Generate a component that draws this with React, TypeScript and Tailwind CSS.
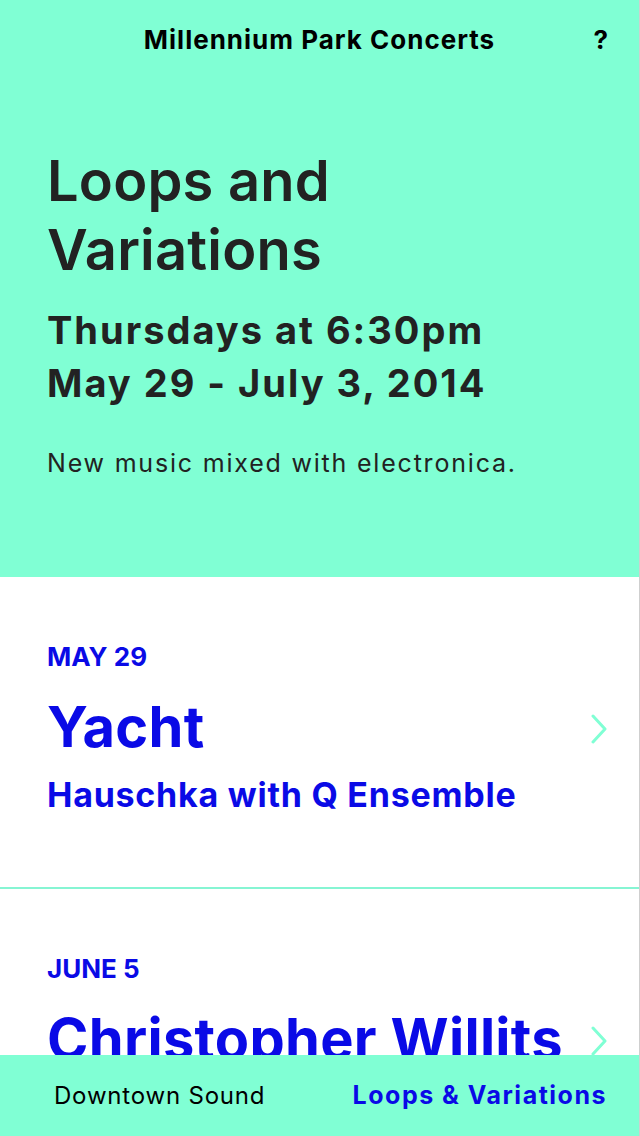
interface Concert {
  date: string;
  headliner: string;
  support?: string;
}

const concerts: Concert[] = [
  { date: 'MAY 29', headliner: 'Yacht', support: 'Hauschka with Q Ensemble' },
  { date: 'JUNE 5', headliner: 'Christopher Willits' },
];

function Chevron() {
  return (
    <svg width="16" height="30" viewBox="0 0 16 30" fill="none" className="shrink-0">
      <path d="M2 2 L14 15 L2 28" stroke="#80ffd4" strokeWidth="3" strokeLinecap="round" strokeLinejoin="round" />
    </svg>
  );
}

function ConcertRow({ date, headliner, support }: Concert) {
  return (
    <div className="border-b-2 border-[#86f5d3] pl-[47px] pr-[32px] pt-[64px] pb-[70px]">
      <div className="text-[26px] font-bold leading-[32px] text-[#0a0ae6]">{date}</div>
      <div className="mt-[16px] flex items-center justify-between">
        <span className="text-[56px] font-bold leading-[76px] tracking-[0.3px] text-[#0a0ae6] whitespace-nowrap">{headliner}</span>
        <span className="mt-[4px]">
          <Chevron />
        </span>
      </div>
      {support && (
        <div className="mt-[8px] text-[34px] font-bold leading-[44px] tracking-[0.75px] text-[#0a0ae6]">{support}</div>
      )}
    </div>
  );
}

export default function App() {
  return (
    <div
      className="flex h-[1136px] w-[640px] flex-col overflow-hidden bg-white border-r border-[#cfcfcf]"
      style={{ fontFamily: 'Inter, "Liberation Sans", sans-serif' }}
    >
      <div className="flex-1 overflow-hidden">
        <section className="h-[577px] bg-[#80ffd4] px-[47px]">
          <header className="relative flex justify-center pt-[24px]">
            <h1 className="text-[26px] font-bold leading-[32px] tracking-[1px] text-black">Millennium Park Concerts</h1>
            <span className="absolute right-[-16px] top-[24px] text-[26px] font-bold leading-[32px] text-black">?</span>
          </header>
          <h2 className="mt-[91px] text-[56px] font-semibold leading-[69px] tracking-[0.2px] text-[#222]">
            Loops and
            <br />
            Variations
          </h2>
          <div className="mt-[19px] text-[38px] font-bold leading-[53px] tracking-[2px] text-[#222]">
            Thursdays at 6:30pm
            <br />
            May 29 - July 3, 2014
          </div>
          <p className="mt-[37px] text-[25px] leading-[32px] tracking-[1.8px] text-[#222]">New music mixed with electronica.</p>
        </section>
        {concerts.map((c) => (
          <ConcertRow key={c.date} {...c} />
        ))}
      </div>
      <nav className="flex h-[81px] shrink-0 items-center justify-between bg-[#80ffd4] pl-[54px] pr-[32px]">
        <span className="text-[24px] tracking-[0.8px] text-black">Downtown Sound</span>
        <span className="text-[25px] font-bold tracking-[1.5px] text-[#0a0ae6]">Loops &amp; Variations</span>
      </nav>
    </div>
  );
}
